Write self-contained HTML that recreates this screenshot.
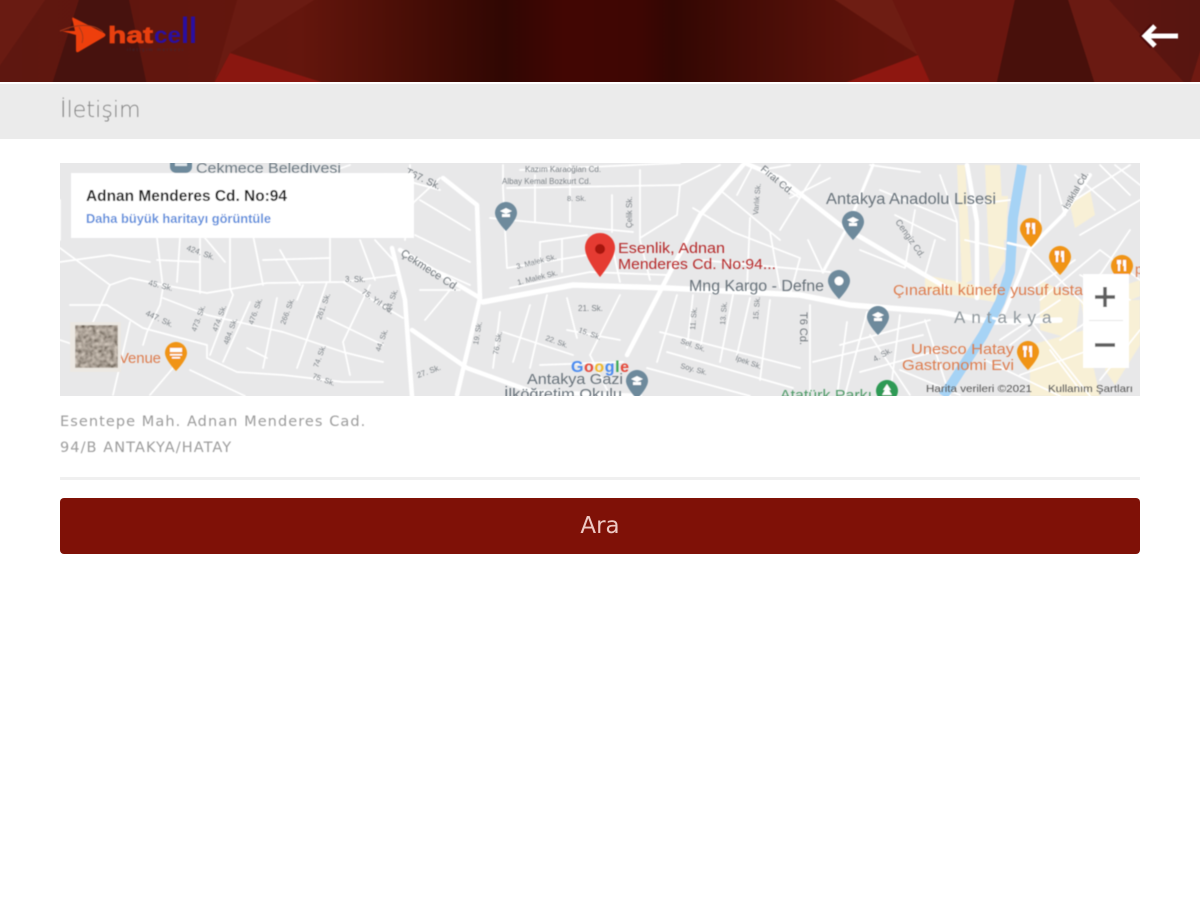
<!DOCTYPE html>
<html lang="tr"><head><meta charset="utf-8"><title>İletişim</title>
<style>
html,body{margin:0;padding:0;background:#fff;width:1200px;height:900px;overflow:hidden;font-family:"DejaVu Sans","Liberation Sans",sans-serif}
.abs{position:absolute}
#hw{left:0;top:0;width:1200px;height:82px;overflow:hidden}
#hdr{left:-10px;top:-10px;width:1220px;height:110px;filter:blur(.6px)}
#bar{left:0;top:84px;width:1200px;height:55px;background:#ebebeb}
#ttl{left:60px;top:97px;font-size:22px;line-height:28px;color:#808080;font-weight:300;letter-spacing:.1px;filter:blur(.5px)}
#map{left:60px;top:163px;width:1080px;height:233px;overflow:hidden}
.addr{left:60px;font-size:14.5px;line-height:26px;color:#9c9c9c;white-space:nowrap;letter-spacing:1.07px;filter:blur(.4px)}
#hr{left:60px;top:477px;width:1080px;height:3px;background:#f0f0f0}
#btn{left:60px;top:498px;width:1080px;height:56px;line-height:56px;background:#7f1107;border-radius:4px;color:#eec9c4;text-align:center;font-size:23px;filter:blur(.3px)}
</style></head><body>
<div id="hw" class="abs">
<svg id="hdr" class="abs" width="1220" height="110" viewBox="-10 -10 1220 110">
<defs>
<linearGradient id="g" gradientUnits="userSpaceOnUse" x1="0" x2="1200" y1="0" y2="0">
<stop offset="0" stop-color="#5e1710"/><stop offset=".25" stop-color="#64160d"/><stop offset=".33" stop-color="#4c0f07"/><stop offset=".42" stop-color="#300703"/><stop offset=".47" stop-color="#420603"/><stop offset=".53" stop-color="#3f0603"/><stop offset=".56" stop-color="#320703"/><stop offset=".62" stop-color="#440c06"/><stop offset=".72" stop-color="#5e130b"/><stop offset=".85" stop-color="#641610"/><stop offset="1" stop-color="#571510"/>
</linearGradient></defs>
<rect x="-10" y="-10" width="1220" height="110" fill="url(#g)"/>
<polygon points="-10,-10 52,-10 -10,80" fill="#691b12"/>
<polygon points="82,-10 127,-10 150,100 47,100" fill="#47120e"/>
<polygon points="255,-10 330,-10 230,53 214,82 240,-10" fill="#6a1b12"/>
<polygon points="230,53 321,82 330,100 205,100" fill="#8a1710"/>
<polygon points="820,-10 888,-10 918,55" fill="#6e1d13"/>
<polygon points="888,-10 1017,-10 993,100 938,100 918,55" fill="#6a160f"/>
<polygon points="918,55 800,100 938,100" fill="#8e1710"/>
<polygon points="1017,-10 1065,-10 1100,100 993,100" fill="#48100b"/>
<polygon points="1065,-10 1100,-10 1200,100 1100,100" fill="#6a1a12"/>
<polygon points="1185,100 1210,20 1210,100" fill="#701a12"/>
<path d="M74 18Q71 16 73 22L75 31L62 31L76 35L76 50Q76 54 80 51L104 37Q107 35 104 33Z" fill="#ee3f0c"/>
<path d="M60 31C72 26 90 21 103 32M79 27C82 32 84 36 82 43" stroke="#a6391a" stroke-width="1" fill="none"/>
<text x="108" y="43" font-family="Liberation Sans" font-weight="700" font-size="23" fill="#e8400f" stroke="#e8400f" stroke-width=".7" textLength="45" lengthAdjust="spacingAndGlyphs">hat</text>
<text x="154" y="43" font-family="Liberation Sans" font-weight="700" font-size="23" fill="#2a0fa0" textLength="27" lengthAdjust="spacingAndGlyphs">ce</text>
<text x="181" y="43" font-family="Liberation Sans" font-weight="700" font-size="36" fill="#2a0fa0" textLength="16" lengthAdjust="spacingAndGlyphs">ll</text>
<text x="127" y="51" font-family="Liberation Sans" font-size="4.500" fill="#3a2a3a" textLength="56">iletişim merkezi</text>
<path d="M1150 36H1176" stroke="#4a0808" stroke-width="7"/>
<path d="M1153 26L1144 36L1153 46" stroke="#4a0808" stroke-width="7" fill="none"/>
<path d="M1148 36H1178" stroke="#fff" stroke-width="5"/>
<path d="M1155 26L1145 36L1155 46" stroke="#fff" stroke-width="5" fill="none"/>
</svg>
</div>
<div id="bar" class="abs"></div>
<div id="ttl" class="abs">İletişim</div>
<svg id="map" class="abs" width="1080" height="233" viewBox="60 163 1080 233" font-family="Liberation Sans">
<defs>
<filter id="b" x="-5%" y="-5%" width="110%" height="110%"><feGaussianBlur stdDeviation=".6"/></filter>
<filter id="n" x="0" y="0" width="100%" height="100%"><feTurbulence type="fractalNoise" baseFrequency=".28" numOctaves="2" seed="4"/><feColorMatrix type="matrix" values=".6 .6 0 0 -.2 .55 .55 0 0 -.2 .5 .5 0 0 -.2 0 0 0 0 1"/><feGaussianBlur stdDeviation=".6"/></filter>
</defs>
<g filter="url(#b)">
<rect x="50" y="153" width="1100" height="253" fill="#e8e8e9"/>
<g fill="#f8f0d6">
<polygon points="957,165 965,165 972,280 962,285"/>
<polygon points="985,165 1000,165 1005,260 990,285"/>
<polygon points="1040,280 1080,300 1075,340 1040,330"/>
<polygon points="1070,205 1090,190 1095,215 1075,228"/>
<polygon points="1030,345 1085,330 1100,396 1030,396"/>
<polygon points="925,275 1000,290 995,302 925,290"/>
<polygon points="1000,196 1008,196 1006,240 998,240"/>
<polygon points="1125,300 1140,300 1140,345 1115,385 1105,370"/>
<polygon points="1080,300 1140,280 1140,296 1085,320"/>
</g>
<g fill="none" stroke="#fff" stroke-linecap="round" stroke-linejoin="round">
<g stroke-width="1.700">
<path d="M60 248L110 285L130 278L163 285L207 293L267 283L343 282L397 275"/>
<path d="M107 305L143 328L207 345L207 358L237 372L283 375L343 382L383 382"/>
<path d="M110 285L93 322L100 340M157 238L163 288L160 305L147 332L143 345"/>
<path d="M163 298L207 315L283 332L343 352L383 362M230 238V288L233 295L210 355M250 302L223 362M277 298L263 368"/>
<path d="M303 285L297 300M327 282L297 368M370 285L343 342L350 375M253 235L263 285M330 238V282M180 238L177 282M200 238V293"/>
<path d="M113 395L130 322M150 395L173 368M343 282L403 318M327 318L383 345M247 348L267 358M60 262L110 255L150 262M60 200V240"/>
<path d="M263 260L330 258M157 260L200 262M205 238L225 262M280 250L300 285M360 240L375 280M375 240L395 262M70 305L107 305M60 340L90 350M190 370L245 396"/>
<path d="M410 165L405 240M385 175L440 190M420 200L470 230M415 235L470 262M425 265L470 285M440 178L400 215M350 165L330 172M420 290L460 290M425 320L450 290"/>
<path d="M503 165V188L507 268M507 188L680 185L677 215L640 238M490 218L633 232M540 242L587 235M507 268L587 255M510 288L590 272L667 275"/>
<path d="M535 175V222M570 165V222M612 195V232M640 170V240M520 170L680 163M680 185L720 165M540 242V275M562 240V272M612 245L620 282M640 240L650 280"/>
<path d="M567 298L577 338M620 295L590 355M500 312L493 368M530 305L513 362M547 295L530 368M503 332L573 355M540 365L623 362M567 330L620 340M590 355L610 396"/>
<path d="M677 295L657 362M693 295L687 348M733 295L720 362M750 298L737 355M660 332L800 368M667 352L793 388M647 368L750 396M710 295L700 350M770 300L760 380"/>
<path d="M737 195L753 165M750 218L747 288M770 232L780 288M693 208L733 232L800 258M780 185L800 198M720 190L780 240M700 260L830 272M800 258L790 295M760 170L790 165"/>
<path d="M790 198L830 178M820 165L780 230M808 240L823 272M870 165L920 172M880 190L957 222M895 215L945 240M940 175L957 222V282M915 210L905 268M860 250L905 268M935 240L925 275"/>
<path d="M810 305V395M847 322L837 396M867 312L845 395M813 362L923 335M840 345L930 320M860 372L940 350M900 315L890 396M925 320L950 396M870 335L910 395M900 370L960 395"/>
<path d="M967 205L1010 200M965 240L1010 250M1030 248L1020 275L1000 322M1030 250L1090 310M1030 290L1075 260M1040 175L1040 230M1050 165L1065 215M1075 175L1115 210M1100 165L1130 195M1080 235L1140 200M1090 290L1130 230M1040 300L1100 250"/>
<path d="M1000 340L1060 300M985 360L1060 396M1030 320L1090 396M1060 340L1120 300M1010 345L1030 330M1050 350L1080 390M1115 165L1140 185M1100 250L1140 280M1080 275L1130 300M1075 200L1130 165M1020 375L1090 350M1100 380L1140 330"/>
</g>
<g stroke-width="4.500">
<path d="M392 248L405 300L412 396"/>
<path d="M443 178L477 205L480 298L457 395"/>
<path d="M412 330L467 368L533 392L640 396"/>
<path d="M627 355L667 278L700 215L743 165"/>
<path d="M967 165L977 222V298"/>
<path d="M400 250L480 298"/>
</g>
<path d="M483 302L573 285L667 288L800 295L850 305L940 312L993 322L1060 320" stroke-width="5.500"/>
<path d="M745 163L780 178L840 225L913 268L947 288" stroke-width="4.500"/>
<path d="M1000 322L1020 275L1030 248L1063 215L1090 175" stroke-width="4"/>
<path d="M823 272L847 228L873 165" stroke-width="3"/>
<path d="M1022 165L1013 218L1010 272L1000 302L983 335L953 382L943 396" stroke="#a6d3f5" stroke-width="10" fill="none" stroke-linecap="butt"/>
<path d="M1008 243L1030 248M993 318L1015 324" stroke-width="2.500"/>
</g>
</g>
<g filter="url(#b)" fill="#7d8388" font-size="7.500">
<text x="345" y="282" font-size="8">3. Sk.</text><text x="148" y="285" font-size="8" transform="rotate(14 148 285)">45. Sk.</text>
<text x="145" y="315" font-size="8" transform="rotate(25 145 315)">447. Sk.</text>
<text x="186" y="250" font-size="8" transform="rotate(20 186 250)">424. Sk.</text>
<text x="196" y="332" transform="rotate(-70 196 332)">473. Sk.</text><text x="217" y="332" transform="rotate(-70 217 332)">474. Sk.</text>
<text x="228" y="345" transform="rotate(-70 228 345)">484. Sk.</text><text x="253" y="325" transform="rotate(-70 253 325)">476. Sk.</text>
<text x="285" y="325" transform="rotate(-70 285 325)">266. Sk.</text>
<text x="321" y="320" transform="rotate(-70 321 320)">261. Sk.</text><text x="361" y="293" font-size="8" transform="rotate(35 361 293)">75. Yıl Cd.</text>
<text x="380" y="352" transform="rotate(-70 380 352)">44. Sk.</text><text x="418" y="378" font-size="8" transform="rotate(-20 418 378)">27. Sk.</text>
<text x="312" y="378" transform="rotate(20 312 378)">75. Sk.</text><text x="318" y="368" transform="rotate(-70 318 368)">74. Sk.</text>
<text x="390" y="312" transform="rotate(-70 390 312)">44. Sk.</text>
<text x="405" y="174" font-size="10" fill="#6f767b" transform="rotate(25 405 174)">T67. Sk.</text>
<text x="400" y="255" font-size="11" fill="#6f767b" transform="rotate(33 400 255)">Çekmece Cd.</text>
<text x="525" y="172" font-size="8">Kazım Karaoğlan Cd.</text><text x="502" y="184" font-size="8">Albay Kemal Bozkurt Cd.</text>
<text x="567" y="201" font-size="7.500">8. Sk.</text><text x="517" y="269" font-size="7.500" transform="rotate(-14 517 269)">3. Malek Sk.</text>
<text x="518" y="285" font-size="7.500" transform="rotate(-14 518 285)">1. Malek Sk.</text>
<text x="578" y="311" font-size="8">21. Sk.</text><text x="578" y="332" transform="rotate(20 578 332)">15. Sk.</text><text x="545" y="340" transform="rotate(20 545 340)">22. Sk.</text>
<text x="680" y="343" transform="rotate(20 680 343)">Sel. Sk.</text><text x="735" y="360" transform="rotate(20 735 360)">İpek Sk.</text>
<text x="680" y="368" transform="rotate(15 680 368)">Soy. Sk.</text>
<text x="478" y="345" transform="rotate(-80 478 345)">19. Sk.</text><text x="498" y="355" transform="rotate(-80 498 355)">76. Sk.</text>
<text x="695" y="330" transform="rotate(-85 695 330)">11. Sk.</text><text x="725" y="325" transform="rotate(-85 725 325)">13. Sk.</text><text x="758" y="320" transform="rotate(-85 758 320)">15. Sk.</text>
<text x="632" y="228" font-size="8" transform="rotate(-90 632 228)">Çelik Sk.</text><text x="758" y="215" transform="rotate(-85 758 215)">Varlık Sk.</text>
<text x="760" y="170" font-size="10" fill="#6f767b" transform="rotate(40 760 170)">Fırat Cd.</text>
<text x="1068" y="210" font-size="9" fill="#6f767b" transform="rotate(-60 1068 210)">İstiklal Cd.</text>
<text x="800" y="312" font-size="11" fill="#6f767b" transform="rotate(90 800 312)">T6 Cd.</text>
<text x="895" y="222" font-size="9" transform="rotate(55 895 222)">Cengiz Cd.</text>
<text x="875" y="362" font-size="8" transform="rotate(-30 875 362)">4. Sk.</text>
</g>
<g filter="url(#b)" text-anchor="start">
<text x="196" y="173" font-size="15" fill="#6d7a83" textLength="145" lengthAdjust="spacingAndGlyphs">Çekmece Belediyesi</text>
<text x="826" y="204" font-size="15.500" fill="#68727a" textLength="170" lengthAdjust="spacingAndGlyphs">Antakya Anadolu Lisesi</text>
<text x="689" y="291" font-size="15.500" fill="#68727a" textLength="135" lengthAdjust="spacingAndGlyphs">Mng Kargo - Defne</text>
<text x="618" y="253" font-size="15" fill="#b5292a" textLength="107" lengthAdjust="spacingAndGlyphs">Esenlik, Adnan</text>
<text x="618" y="269" font-size="15" fill="#b5292a" textLength="158" lengthAdjust="spacingAndGlyphs">Menderes Cd. No:94...</text>
<text x="893" y="295" font-size="15" fill="#dd7d4f" textLength="190" lengthAdjust="spacingAndGlyphs">Çınaraltı künefe yusuf usta</text>
<text x="954" y="323" font-size="17" fill="#8f979c" letter-spacing="6">Antakya</text>
<text x="911" y="354" font-size="15" fill="#dd7d4f" textLength="103" lengthAdjust="spacingAndGlyphs">Unesco Hatay</text>
<text x="902" y="370" font-size="15" fill="#dd7d4f" textLength="112" lengthAdjust="spacingAndGlyphs">Gastronomi Evi</text>
<text x="119" y="363" font-size="15" fill="#dd7d4f" textLength="42">Venue</text>
<text x="527" y="384" font-size="15" fill="#68727a" textLength="96" lengthAdjust="spacingAndGlyphs">Antakya Gazi</text>
<text x="504" y="399" font-size="15" fill="#68727a" textLength="118" lengthAdjust="spacingAndGlyphs">İlköğretim Okulu</text>
<text x="780" y="400" font-size="15" fill="#4f9a68" textLength="92" lengthAdjust="spacingAndGlyphs">Atatürk Parkı</text>
<text x="571" y="372" font-size="16" font-weight="700" fill="#4b8bef" textLength="58">G<tspan fill="#e5493a">o</tspan><tspan fill="#f0b72a">o</tspan>g<tspan fill="#3aa757">l</tspan><tspan fill="#e5493a">e</tspan></text>
<path d="M600 233c-8.500 0-15 6.500-15 15 0 11 15 29 15 29s15-18 15-29c0-8.500-6.500-15-15-15z" fill="#e53a30"/>
<circle cx="600" cy="249" r="5" fill="#a61511"/>
<path d="M506 202c-6 0-11 5-11 11 0 7 11 18 11 18s11-11 11-18c0-6-5-11-11-11z" fill="#6e8a9c"/><path d="M500 211l6-3 6 3-6 3zM502 214h8v3h-8z" fill="#fff"/>
<path d="M853 211c-6 0-11 5-11 11 0 7 11 18 11 18s11-11 11-18c0-6-5-11-11-11z" fill="#6e8a9c"/><path d="M847 220l6-3 6 3-6 3zM849 223h8v3h-8z" fill="#fff"/>
<path d="M839 270c-6 0-11 5-11 11 0 7 11 18 11 18s11-11 11-18c0-6-5-11-11-11z" fill="#6e8a9c"/><circle cx="839" cy="281" r="4.500" fill="#fff"/>
<path d="M878 306c-6 0-11 5-11 11 0 7 11 18 11 18s11-11 11-18c0-6-5-11-11-11z" fill="#6e8a9c"/><path d="M872 315l6-3 6 3-6 3zM874 318h8v3h-8z" fill="#fff"/>
<path d="M637 370c-6 0-11 5-11 11 0 7 11 18 11 18s11-11 11-18c0-6-5-11-11-11z" fill="#6e8a9c"/><path d="M631 379l6-3 6 3-6 3zM633 382h8v3h-8z" fill="#fff"/>
<path d="M176 342c-6 0-11 5-11 11 0 7 11 18 11 18s11-11 11-18c0-6-5-11-11-11z" fill="#f09419"/><path d="M170 348h12v4h-12zM170 354h12v1.500h-12zM172 357h8v1.500h-8z" fill="#fff"/>
<path d="M1031 218c-6 0-11 5-11 11 0 7 11 18 11 18s11-11 11-18c0-6-5-11-11-11z" fill="#f09419"/><path d="M1026 223h4v4h-1v7h-2v-7h-1zM1032 223h3v11h-2v-5h-1z" fill="#fff"/>
<path d="M1060 246c-6 0-11 5-11 11 0 7 11 18 11 18s11-11 11-18c0-6-5-11-11-11z" fill="#f09419"/><path d="M1055 251h4v4h-1v7h-2v-7h-1zM1061 251h3v11h-2v-5h-1z" fill="#fff"/>
<path d="M1122 255c-6 0-11 5-11 11 0 7 11 18 11 18s11-11 11-18c0-6-5-11-11-11z" fill="#f09419"/><path d="M1117 260h4v4h-1v7h-2v-7h-1zM1123 260h3v11h-2v-5h-1z" fill="#fff"/>
<path d="M1028 341c-6 0-11 5-11 11 0 7 11 18 11 18s11-11 11-18c0-6-5-11-11-11z" fill="#f09419"/><path d="M1023 346h4v4h-1v7h-2v-7h-1zM1029 346h3v11h-2v-5h-1z" fill="#fff"/>
<path d="M887 380c-6 0-11 5-11 11 0 7 11 18 11 18s11-11 11-18c0-6-5-11-11-11z" fill="#2f9a55"/><path d="M887 384l4 6h-2l3 5h-10l3-5h-2z" fill="#fff"/>
<path d="M170 160h22v7c0 3-3 6-6 6h-10c-3 0-6-3-6-6z" fill="#6e8a9c"/><rect x="175" y="163" width="12" height="3" fill="#dfe6ea"/>
<text x="1135" y="274" font-size="14" fill="#dd7d4f">p</text>
<rect x="71" y="173" width="343" height="65" fill="#fff"/>
<text x="86" y="201" font-size="15.500" font-weight="700" fill="#222" textLength="201" lengthAdjust="spacingAndGlyphs">Adnan Menderes Cd. No:94</text>
<text x="86" y="223" font-size="12.500" font-weight="700" fill="#5f90dd" textLength="185" lengthAdjust="spacingAndGlyphs">Daha büyük haritayı görüntüle</text>
<rect x="70" y="322" width="51" height="50" fill="#ece8e2"/>
<rect x="75" y="325" width="43" height="43" fill="#7a7268" filter="url(#n)"/>
<rect x="1083" y="274" width="46" height="94" fill="#fff"/>
<rect x="1089" y="320" width="34" height="1" fill="#e6e6e6"/>
<path d="M1105 287v20M1095 297h20" stroke="#5f5f5f" stroke-width="3.500"/>
<path d="M1095 345h20" stroke="#5f5f5f" stroke-width="3.500"/>
<text x="926" y="392" font-size="10.500" fill="#555" textLength="106" lengthAdjust="spacingAndGlyphs">Harita verileri ©2021</text>
<text x="1048" y="392" font-size="10.500" fill="#555" textLength="85" lengthAdjust="spacingAndGlyphs">Kullanım Şartları</text>
</g>
</svg>
<div class="abs addr" style="top:409px">Esentepe Mah. Adnan Menderes Cad.</div>
<div class="abs addr" style="top:435px">94/B ANTAKYA/HATAY</div>
<div id="hr" class="abs"></div>
<div id="btn" class="abs">Ara</div>
</body></html>
